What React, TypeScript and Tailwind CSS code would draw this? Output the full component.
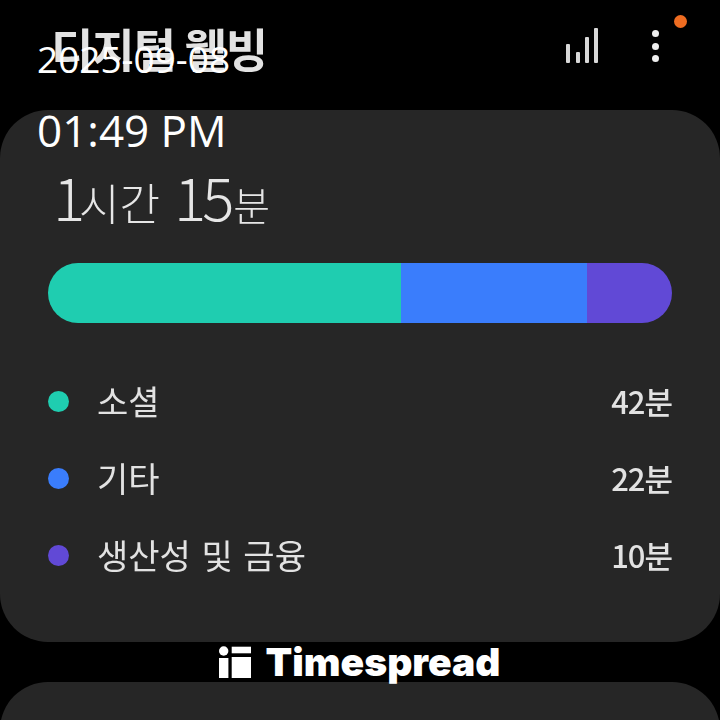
const rows = [
  { label: "소셜", value: "42분", dot: "bg-[#1fcdb0]" },
  { label: "기타", value: "22분", dot: "bg-[#3a7dfc]" },
  { label: "생산성 및 금융", value: "10분", dot: "bg-[#6149d6]" },
];

const cjk = "font-['Noto_Sans_CJK_KR','Noto_Sans',sans-serif]";

function SignalIcon() {
  return (
    <svg width="34" height="36" viewBox="0 0 34 36">
      <rect x="0" y="16" width="4" height="19" rx="1" fill="#d8d8d8" />
      <rect x="10" y="24" width="4" height="11" rx="1" fill="#d8d8d8" />
      <rect x="19" y="9" width="4" height="26" rx="1" fill="#d8d8d8" />
      <rect x="28" y="0" width="4" height="35" rx="1" fill="#d8d8d8" />
    </svg>
  );
}

function Dots() {
  return (
    <div className="flex flex-col gap-[5.5px]">
      <div className="h-[7px] w-[7px] rounded-full bg-[#eeeeee]" />
      <div className="h-[7px] w-[7px] rounded-full bg-[#eeeeee]" />
      <div className="h-[7px] w-[7px] rounded-full bg-[#eeeeee]" />
    </div>
  );
}

function LogoMark() {
  return (
    <svg width="32" height="32" viewBox="0 0 32 32">
      <circle cx="4.7" cy="5" r="4.7" fill="#fff" />
      <rect x="0" y="12" width="9.4" height="20" fill="#fff" />
      <rect x="12.7" y="0.7" width="19.3" height="6.6" fill="#fff" />
      <rect x="12.7" y="11" width="19.3" height="21" fill="#fff" />
    </svg>
  );
}

export default function App() {
  return (
    <div className={`relative h-[720px] w-[720px] overflow-hidden bg-black ${cjk}`}>
      <header className="flex h-[110px] items-start justify-between pl-[51px] pr-[33px]">
        <h1 className="mt-[13px] text-[46px] font-bold leading-[68px] tracking-[-1px] text-[#e2e2e2] blur-[0.6px]">
          디지털 웰빙
        </h1>
        <div className="relative mt-[28px] flex items-start">
          <SignalIcon />
          <div className="ml-[52px] mr-[28px] mt-[2px]">
            <Dots />
          </div>
          <div className="absolute right-0 top-[-13px] h-[13px] w-[13px] rounded-full bg-[#ee6c21]" />
        </div>
      </header>

      <section className="h-[532px] rounded-[48px] bg-[#262626] px-[48px] pt-[55px]">
        <p className="flex items-baseline pl-[5px] text-[#e6e6e6] blur-[0.5px]">
          <span className="text-[60px] font-light leading-[60px]">1</span>
          <span className="ml-[-6px] text-[44px] font-light leading-[60px]">시간</span>
          <span className="ml-[14px] text-[60px] font-light leading-[60px] tracking-[-4px]">15</span>
          <span className="ml-[3px] text-[40px] font-light leading-[60px]">분</span>
        </p>
        <div className="mt-[29px] flex h-[60px] w-[624px] overflow-hidden rounded-full">
          <div className="w-[353px] bg-[#1fcdb0]" />
          <div className="w-[186px] bg-[#3a7dfc]" />
          <div className="flex-1 bg-[#6149d6]" />
        </div>
        <ul className="mt-[63px] flex flex-col gap-[47px]">
          {rows.map((row) => (
            <li key={row.label} className="flex h-[30px] items-center text-[#e2e2e2] blur-[0.5px]">
              <span className={`h-[21px] w-[21px] rounded-full ${row.dot}`} />
              <span className="ml-[28px] text-[34px] leading-[30px] [word-spacing:3px]">{row.label}</span>
              <span className="ml-auto text-[31px] font-medium leading-[30px] tracking-[-1px]">{row.value}</span>
            </li>
          ))}
        </ul>
      </section>

      <div className="flex h-[40px] items-center justify-center gap-[14px]">
        <LogoMark />
        <span className="font-['Inter',sans-serif] text-[39px] font-black leading-[40px] text-white">Timespread</span>
      </div>

      <section className="h-[60px] rounded-t-[48px] bg-[#262626]" />

      <div className="absolute left-[37px] top-[35px] font-['Open_Sans',sans-serif] text-[37px] font-normal leading-[48px] text-white">
        2025-09-08
      </div>
      <div className="absolute left-[37px] top-[105px] font-['Open_Sans',sans-serif] text-[44px] font-normal leading-[50px] text-white">
        01:49 PM
      </div>
    </div>
  );
}
